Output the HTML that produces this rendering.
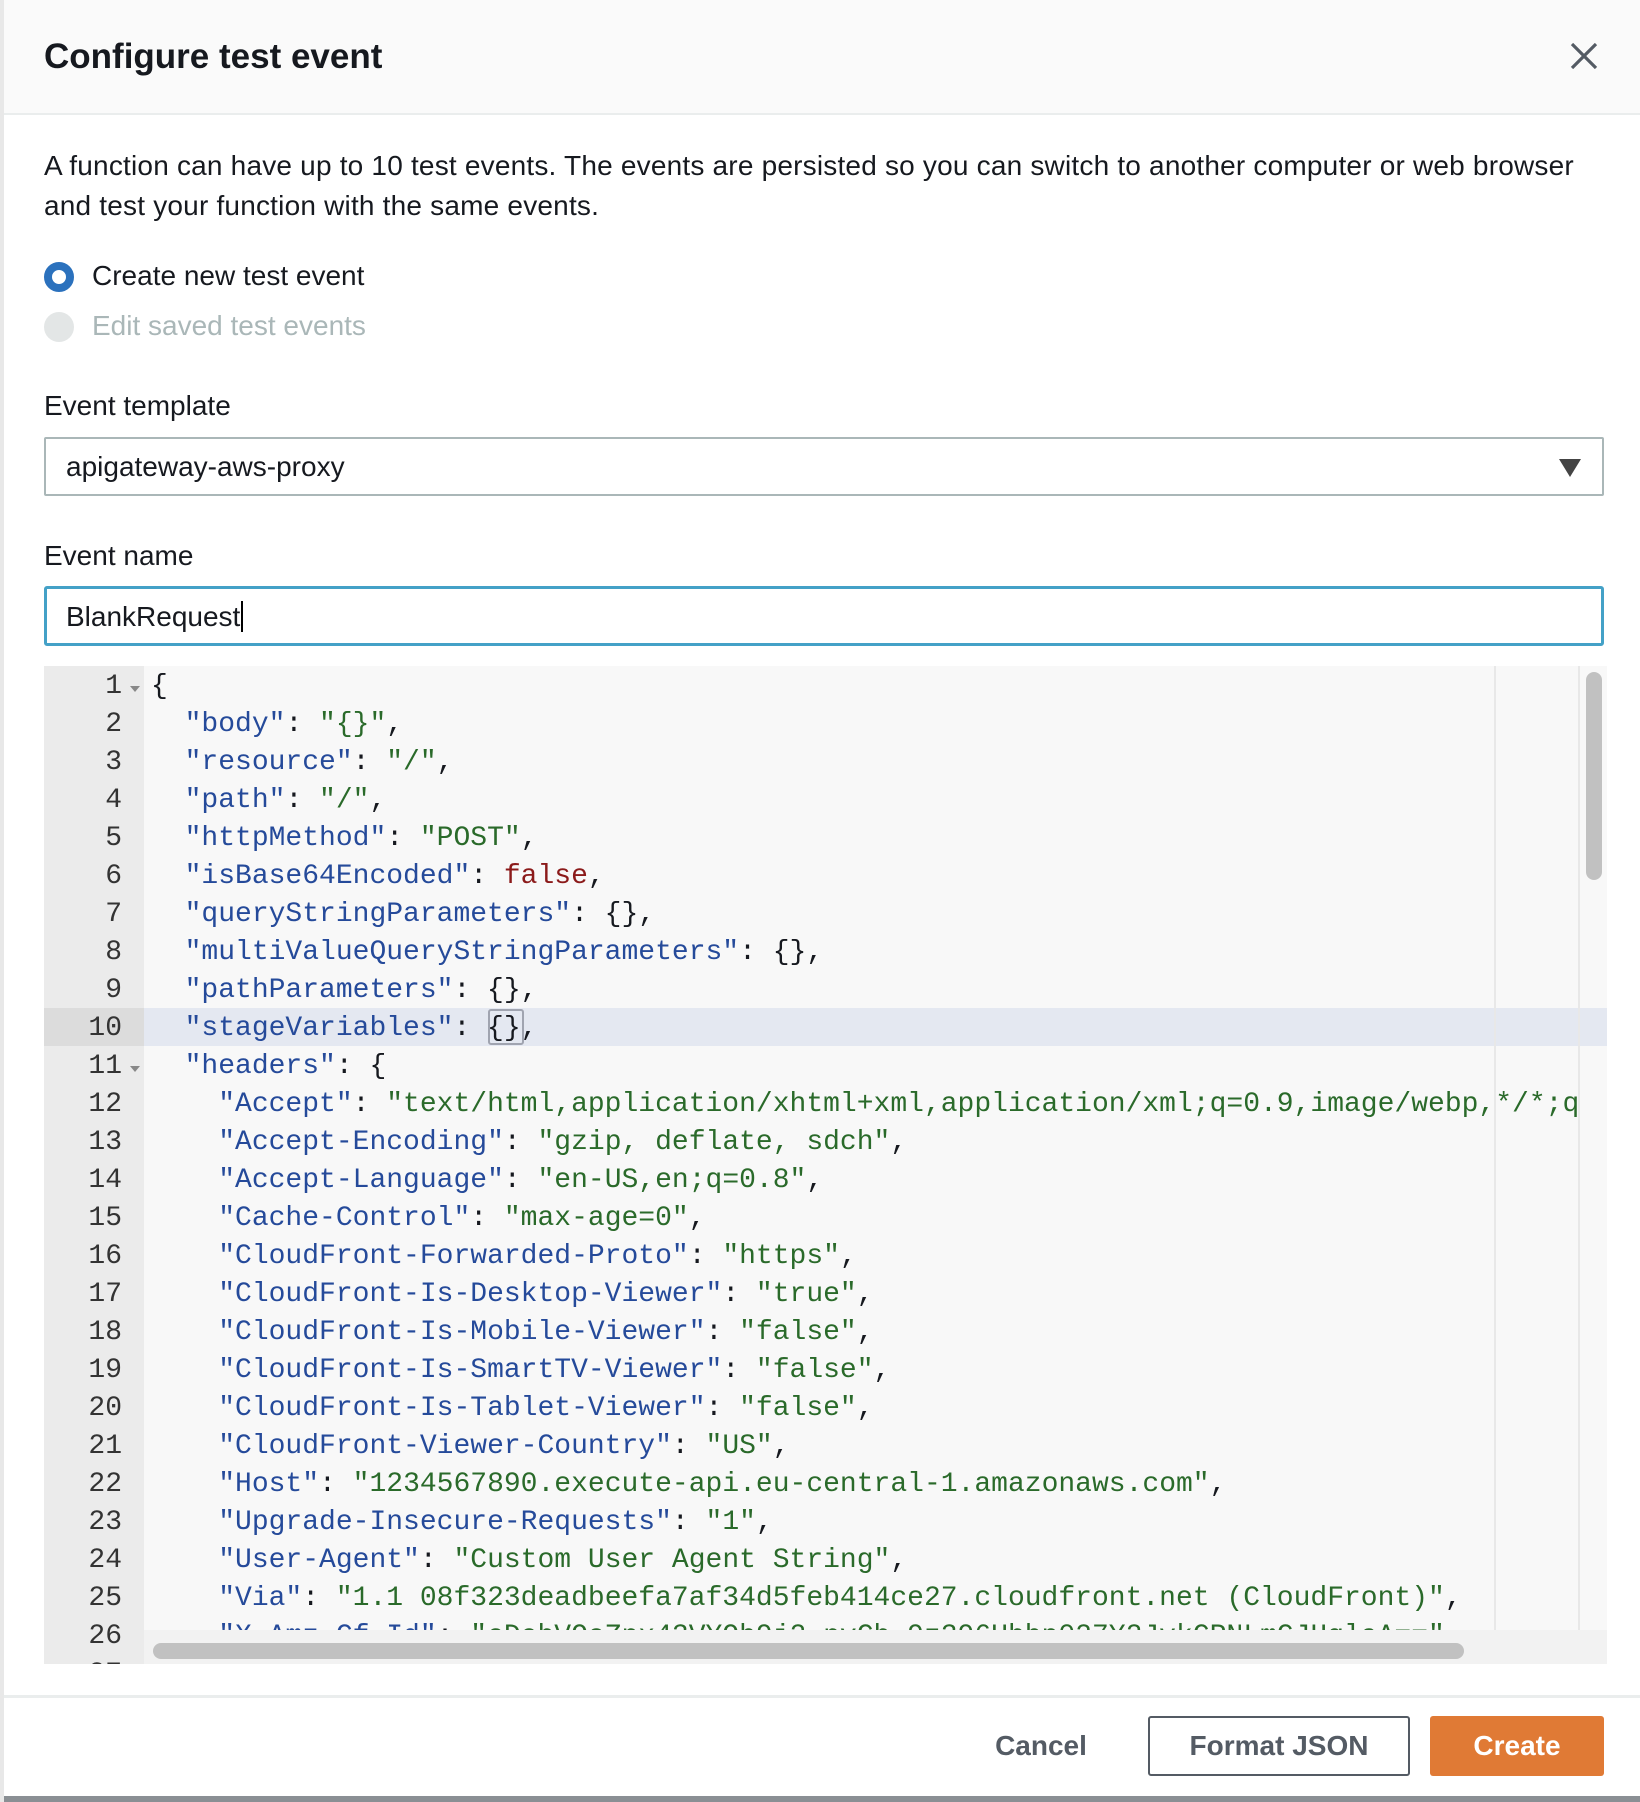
<!DOCTYPE html>
<html><head><meta charset="utf-8"><style>
*{box-sizing:border-box;margin:0;padding:0}
body{width:1640px;height:1802px;background:#8a8f94;font-family:"Liberation Sans",sans-serif;color:#16191f;position:relative;overflow:hidden}
.modal{position:absolute;left:4px;top:0;width:1636px;height:1796px;background:#fff}
.hdr{position:absolute;left:0;top:0;width:100%;height:115px;background:#fafafa;border-bottom:2px solid #eaeded}
.title{position:absolute;left:40px;top:37px;font-size:35px;font-weight:bold}
.abs{position:absolute}
.p{left:40px;font-size:28px;color:#16191f}
.radio{position:absolute;left:40px;width:30px;height:30px;border-radius:50%}
.sel{position:absolute;left:40px;width:1560px;height:59px;border:2px solid #aab7b8;border-radius:2px}
.ed{position:absolute;left:40px;top:666px;width:1563px;height:998px;background:#f8f8f8;overflow:hidden}
.gut{position:absolute;left:0;top:0;width:100px;height:100%;background:#ebebeb}
.code{position:absolute;left:0;top:0;font-family:"Liberation Mono",monospace;font-size:28px;line-height:38px;white-space:pre}
.ln{position:absolute;left:0;width:78px;text-align:right;color:#333;font-family:"Liberation Mono",monospace;font-size:28px}
.k{color:#254a9a}.s{color:#2a6a2a}.b{color:#8b1a1a}
.btn{position:absolute;top:1716px;height:60px;font-size:28px;font-weight:bold;display:flex;align-items:center;justify-content:center;border-radius:3px}
</style></head><body>
<div class="modal">
<div class="hdr"><div class="title">Configure test event</div>
<svg class="abs" style="left:1566px;top:43px" width="28" height="26" viewBox="0 0 28 26"><path d="M2 1L26 25M26 1L2 25" stroke="#545b64" stroke-width="3.2"/></svg></div>
<div class="abs p" style="top:150px;letter-spacing:0.2px">A function can have up to 10 test events. The events are persisted so you can switch to another computer or web browser</div>
<div class="abs p" style="top:190px;letter-spacing:0.2px">and test your function with the same events.</div>
<div class="radio" style="top:262px;background:#fff;border:8px solid #2b71bd"></div>
<div class="abs p" style="left:88px;top:260px">Create new test event</div>
<div class="radio" style="top:312px;background:#e3e6e6"></div>
<div class="abs p" style="left:88px;top:310px;color:#aab7b8">Edit saved test events</div>
<div class="abs p" style="top:390px">Event template</div>
<div class="sel" style="top:437px"><div class="abs" style="left:20px;top:12px;font-size:28px">apigateway-aws-proxy</div>
<svg class="abs" style="left:1513px;top:20px" width="22" height="18"><path d="M0 0H22L11 18Z" fill="#444"/></svg></div>
<div class="abs p" style="top:540px">Event name</div>
<div class="sel" style="top:586px;height:60px;border:3px solid #44a1c7;border-radius:3px"><div class="abs" style="left:19px;top:12px;font-size:28px">BlankRequest<span style="border-left:2px solid #000;margin-left:1px"></span></div></div>
<div class="ed">
<div class="gut"></div>
<div class="abs" style="left:0;top:342px;width:100px;height:38px;background:#dcdcdc"></div>
<div class="abs" style="left:100px;top:342px;width:1475px;height:38px;background:#e4e8f1"></div>
<div class="abs" style="left:1450px;top:0;width:2px;height:100%;background:#e8e8e8"></div>
<div class="abs" style="left:1534px;top:0;width:2px;height:100%;background:#e8e8e8"></div>
<div class="abs" style="left:1542px;top:6px;width:16px;height:208px;border-radius:8px;background:#c1c1c1"></div>
<div class="abs" style="left:100px;top:964px;width:1463px;height:34px;background:#f2f2f2"></div>
<div class="abs" style="left:109px;top:977px;width:1311px;height:16px;border-radius:8px;background:#c1c1c1"></div>
<div class="abs" style="left:444px;top:343px;width:36px;height:36px;border:2px solid #a0a4b0;border-radius:3px"></div>
<div class="ln" style="top:2px;line-height:38px">1<br>2<br>3<br>4<br>5<br>6<br>7<br>8<br>9<br>10<br>11<br>12<br>13<br>14<br>15<br>16<br>17<br>18<br>19<br>20<br>21<br>22<br>23<br>24<br>25<br>26<br>27</div>
<div class="abs" style="left:86px;top:20px;border:5px solid transparent;border-top:6px solid #888"></div>
<div class="abs" style="left:86px;top:400px;border:5px solid transparent;border-top:6px solid #888"></div>
<div class="code" style="left:107px;top:2px;width:1428px;height:962px;overflow:hidden">{
  <span class="k">"body"</span>: <span class="s">"{}"</span>,
  <span class="k">"resource"</span>: <span class="s">"/"</span>,
  <span class="k">"path"</span>: <span class="s">"/"</span>,
  <span class="k">"httpMethod"</span>: <span class="s">"POST"</span>,
  <span class="k">"isBase64Encoded"</span>: <span class="b">false</span>,
  <span class="k">"queryStringParameters"</span>: {},
  <span class="k">"multiValueQueryStringParameters"</span>: {},
  <span class="k">"pathParameters"</span>: {},
  <span class="k">"stageVariables"</span>: {},
  <span class="k">"headers"</span>: {
    <span class="k">"Accept"</span>: <span class="s">"text/html,application/xhtml+xml,application/xml;q=0.9,image/webp,*/*;q=0.8"</span>,
    <span class="k">"Accept-Encoding"</span>: <span class="s">"gzip, deflate, sdch"</span>,
    <span class="k">"Accept-Language"</span>: <span class="s">"en-US,en;q=0.8"</span>,
    <span class="k">"Cache-Control"</span>: <span class="s">"max-age=0"</span>,
    <span class="k">"CloudFront-Forwarded-Proto"</span>: <span class="s">"https"</span>,
    <span class="k">"CloudFront-Is-Desktop-Viewer"</span>: <span class="s">"true"</span>,
    <span class="k">"CloudFront-Is-Mobile-Viewer"</span>: <span class="s">"false"</span>,
    <span class="k">"CloudFront-Is-SmartTV-Viewer"</span>: <span class="s">"false"</span>,
    <span class="k">"CloudFront-Is-Tablet-Viewer"</span>: <span class="s">"false"</span>,
    <span class="k">"CloudFront-Viewer-Country"</span>: <span class="s">"US"</span>,
    <span class="k">"Host"</span>: <span class="s">"1234567890.execute-api.eu-central-1.amazonaws.com"</span>,
    <span class="k">"Upgrade-Insecure-Requests"</span>: <span class="s">"1"</span>,
    <span class="k">"User-Agent"</span>: <span class="s">"Custom User Agent String"</span>,
    <span class="k">"Via"</span>: <span class="s">"1.1 08f323deadbeefa7af34d5feb414ce27.cloudfront.net (CloudFront)"</span>,
    <span class="k">"X-Amz-Cf-Id"</span>: <span class="s">"cDehVQoZnx43VYQb9j2-nvCh-9z396Uhbp027Y2JvkCPNLmGJHqlaA=="</span>,</div>
</div>
<div class="abs" style="left:0;top:1695px;width:100%;height:3px;background:#eaeded"></div>
<div class="btn" style="left:982px;width:110px;color:#545b64">Cancel</div>
<div class="btn" style="left:1144px;width:262px;border:2px solid #545b64;color:#545b64">Format JSON</div>
<div class="btn" style="left:1426px;width:174px;background:#e07a35;color:#fff">Create</div>
</div>
<div class="abs" style="left:0;top:0;width:4px;height:1802px;background:#e8e8e8"></div>
</body></html>
